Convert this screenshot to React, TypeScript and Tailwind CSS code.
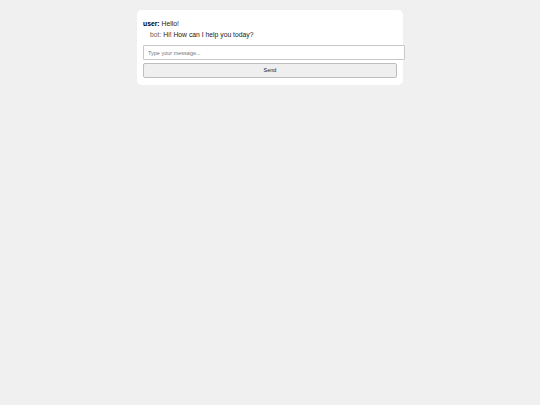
import React, { useState } from "react";

const messages = [
  { sender: "user", text: "Hello!" },
  { sender: "bot", text: "Hi! How can I help you today?" },
];

export default function App() {
  const [value, setValue] = useState("");

  return (
    <div className="min-h-screen bg-[#f0f0f0] pt-[10px] font-['Liberation_Sans',Arial,sans-serif]">
      <div className="mx-auto w-[266px] rounded-[5px] bg-white px-[6px] pt-[8px] pb-[7px]">
        <div className="mb-[5px] text-[6.8px] leading-[11px] text-[#222]">
          {messages.map((m, i) =>
            m.sender === "user" ? (
              <div key={i}>
                <span className="font-bold text-black">user:</span> {m.text}
              </div>
            ) : (
              <div key={i} className="pl-[7px]">
                <span className="text-[#666]">bot:</span> {m.text}
              </div>
            )
          )}
        </div>
        <input
          value={value}
          onChange={(e) => setValue(e.target.value)}
          placeholder="Type your message..."
          className="block h-[15px] w-[262px] rounded-[1px] border border-[#c8c8c8] bg-white px-[4px] text-[5.5px] text-[#333] outline-none placeholder:text-[#777]"
        />
        <button className="mt-[3px] block h-[15px] w-[254px] rounded-[2px] border border-[#bdbdbd] bg-[#efefef] text-[5.5px] text-[#222]">
          Send
        </button>
      </div>
    </div>
  );
}
